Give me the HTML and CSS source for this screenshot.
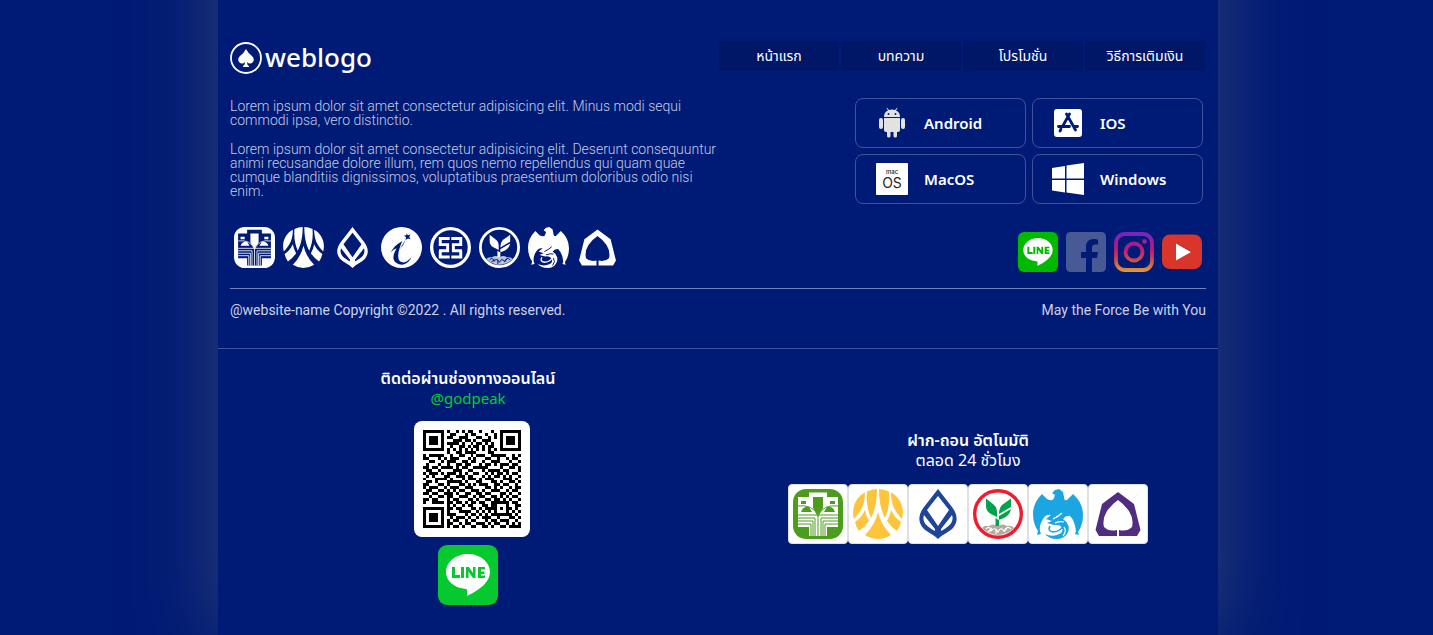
FILE: index.html
```html
<!DOCTYPE html>
<html lang="th">
<head>
<meta charset="utf-8">
<meta name="viewport" content="width=device-width, initial-scale=1">
<title>weblogo</title>
<link rel="stylesheet" href="styles.css">
</head>
<body>
<svg class="sprite" aria-hidden="true">
  <symbol id="baac" viewBox="0 0 50 50">
    <rect width="50" height="50" rx="13" fill="currentColor"/>
    <path class="cut" d="M5 8H16V3.500H34V8H45V38H34V47H16V38H5Z"/>
    <path d="M20 8H30V19L25 26L20 19ZM8 12H13V15H8ZM37 12H42V15H37ZM8 23Q10 17 16 18L19 23ZM42 23Q40 17 34 18L31 23Z" fill="currentColor"/>
    <path d="M5 17Q20 15 25 27Q30 15 45 17M5 26H45M5 29H22V47M45 29H28V47M5 32H20V47M45 32H30V47M5 35H18V47M45 35H32V47M25 26V47" fill="none" stroke="currentColor"/>
  </symbol>
  <symbol id="krungsri" viewBox="0 0 50 50">
    <path fill="currentColor" d="M12 3.500C12 14 9 22 1 30C-2 19 3 8 12 3.500ZM14 2.500Q19 0 24 0C24 12 22 21 18 29C15 22 13 14 14 2.500ZM36 2.500Q31 0 26 0C26 12 28 21 32 29C35 22 37 14 36 2.500ZM38 3.500C38 14 41 22 49 30C52 19 47 8 38 3.500ZM12 21Q13 27 16 32Q12 38 6 42Q3 38 2 33Q9 28 12 21ZM38 21Q37 27 34 32Q38 38 44 42Q47 38 48 33Q41 28 38 21ZM25 23Q28 36 38 46Q25 54 12 46Q22 36 25 23Z"/>
  </symbol>
  <symbol id="bangkok" viewBox="0 0 50 50">
    <path fill="currentColor" fill-rule="evenodd" d="M25 0L39 18C45 26 45 33 40 39C36 43 30 45 25 50C20 45 14 43 10 39C5 33 5 26 11 18ZM25 7L14 21L25 37L36 21ZM11 26C9 32 12 37 22 42V40ZM39 26C41 32 38 37 28 42V40Z"/>
  </symbol>
  <symbol id="islamic" viewBox="0 0 50 50">
    <circle cx="25" cy="25" r="25" fill="currentColor"/>
    <path class="cut" d="M12 31C16 23 21 20 26 17C22 26 17 41 26 43C31 44 34 40 37 37C33 46 25 48 19 44C12 39 16 32 19 26Q15 27 12 31ZM31 8L33 10L36 9L34.500 12L36 15L33 14L30 16L30.500 12.500L28 10.500L31 10Z"/>
    <path class="cut" d="M30 15L23 27L27 22Z"/>
  </symbol>
  <symbol id="icbc" viewBox="0 0 50 50">
    <circle cx="25" cy="25" r="23" fill="none" stroke="currentColor" stroke-width="4"/>
    <path d="M24 14H12.500V21.500H21.500V29H11M26 14H37.500V21.500H28.500V29H39M12.500 29V36.500H24M37.500 29V36.500H26" fill="none" stroke="currentColor" stroke-width="3.600"/>
  </symbol>
  <symbol id="kasikorn" viewBox="0 0 50 50">
    <path class="stones" d="M9 39Q11 36 16 37Q20 34 25 37Q30 34 34 37Q39 36 41 39Q34 46 25 46Q16 46 9 39Z"/>
    <path class="cutline" d="M13 40Q17 36 18 42Q22 37 25 43Q28 37 31 42Q34 36 38 40M15 43L19 39M23 45V40M31 43L34 39"/>
    <path class="leaf" d="M13 9.500L20 15Q24 18 24 23V28L17 24.500Q13 22 13 17ZM38 9.500L29 16Q26 19 26 25L38 18ZM38 20L26 27V37H22.500V29L24 30Q25 32 31 29Q37 26 38 20Z"/>
    <circle cx="25" cy="25" r="23.300" fill="none" stroke="currentColor" stroke-width="3.400"/>
  </symbol>
  <symbol id="krungthai" viewBox="0 0 50 50">
    <path fill="currentColor" d="M19 4L22 1L26 0L30 3L31 8Q31 12 34 11L40 5Q50 14 50 26Q50 36 45 43L46 46L42 45L43 42Q42 32 37 27Q33 26 30 30Q38 36 35 43Q32 50 24 50Q16 50 12 45Q18 48 24 46Q31 44 29 39Q27 35 21 36L14 34L19 32L13 30L18 26Q13 25 10 30Q6 36 7 42L8 45L4 46L5 42Q0 35 0 25Q0 14 9 5L14 10Q20 13 21 9L22 6Z"/>
    <path d="M17 37Q14 42 20 43Q28 43 33 33" fill="none" stroke="currentColor" stroke-width="1.600"/>
    <path class="cutline" d="M20 30Q26 27 29 24M22 34Q27 32 31 33M30 47Q34 42 31 38"/>
  </symbol>
  <symbol id="savings" viewBox="0 0 50 50">
    <path fill="currentColor" d="M25 3L41 15L47.500 41L44 47H26V41Q34 43 39 38Q41 30 36 22Q31 15 25 11Q19 15 14 22Q9 30 11 38Q16 43 24 41V47H6L2.500 41L9 15Z"/>
    <path class="cut" d="M24 40H26V47H24Z"/>
  </symbol>
  <symbol id="line" viewBox="0 0 60 60">
    <rect width="60" height="60" rx="9" fill="currentColor"/>
    <path fill="#fff" d="M30 9C18 9 8 17 8 27C8 36 16 43 28 44Q30 45 29 51Q52 40 52 27C52 17 42 9 30 9Z"/>
    <path d="M17 22H20V30H25V33H17ZM26 22H29V33H26ZM31 22H34L38 28V22H40.500V33H38L33.500 26.500V33H31ZM43 22H50V24.500H46V26.500H49.500V29H46V30.500H50V33H43Z" transform="translate(-3 0)" fill="currentColor"/>
  </symbol>
</svg>

<footer class="page">
  <section class="main">
    <div class="top">
      <a class="logo" href="#">
        <svg viewBox="0 0 32 32" aria-hidden="true"><circle cx="16" cy="16" r="15" fill="none" stroke="#fff" stroke-width="1.800"/><path fill="#fff" d="M16 7Q18 11 22 14Q25 17 23 20Q20 23 17 20Q17 23 19 24V25H13V24Q15 23 15 20Q12 23 9 20Q7 17 10 14Q14 11 16 7Z"/></svg>
        <span>weblogo</span>
      </a>
      <nav class="menu">
        <a href="#">หน้าแรก</a>
        <a href="#">บทความ</a>
        <a href="#">โปรโมชั่น</a>
        <a href="#">วิธีการเติมเงิน</a>
      </nav>
    </div>

    <div class="middle">
      <div class="about">
        <p>Lorem ipsum dolor sit amet consectetur adipisicing elit. Minus modi sequi commodi ipsa, vero distinctio.</p>
        <p>Lorem ipsum dolor sit amet consectetur adipisicing elit. Deserunt consequuntur animi recusandae dolore illum, rem quos nemo repellendus qui quam quae cumque blanditiis dignissimos, voluptatibus praesentium doloribus odio nisi enim.</p>
      </div>
      <div class="apps">
        <a href="#">
          <svg viewBox="0 0 32 32" aria-hidden="true"><g fill="#e2e2e2"><path d="M8 10Q8 5 12 3.500L10.500 1L11 .7L13 3Q16 2 19 3L21 .7L21.500 1L20 3.500Q24 5 24 10Z"/><path d="M8 11H24V23Q24 25 22 25H21V29Q21 30.500 19.200 30.500T17.500 29V25H14.500V29Q14.500 30.500 12.800 30.500T11 29V25H10Q8 25 8 23Z"/><rect x="3" y="11" width="4" height="11" rx="2"/><rect x="25" y="11" width="4" height="11" rx="2"/></g><circle class="cut" cx="12.500" cy="7" r="1"/><circle class="cut" cx="19.500" cy="7" r="1"/></svg>
          <span>Android</span>
        </a>
        <a href="#">
          <svg viewBox="0 0 32 32" aria-hidden="true"><rect x="2" y="2" width="28" height="28" rx="3" fill="#fff"/><path class="navyline" d="M17.500 7L10.500 19.500M14.500 7L23.500 23M6.500 19.500H17.500M21.500 19.500H25.500M9 22L8 24"/></svg>
          <span>IOS</span>
        </a>
        <a href="#">
          <svg viewBox="0 0 32 32" aria-hidden="true"><rect width="32" height="32" rx="1" fill="#fff"/><text class="mac"><tspan class="mac-small" x="16" y="11">mac</tspan><tspan class="mac-big" x="16" y="25">OS</tspan></text></svg>
          <span>MacOS</span>
        </a>
        <a href="#">
          <svg viewBox="0 0 32 32" aria-hidden="true"><path fill="#fff" d="M0 5L13 3V15.500H0ZM14.500 2.500L32 0V15.500H14.500ZM0 17H13V29.500L0 27.500ZM14.500 17H32V32L14.500 29.500Z"/></svg>
          <span>Windows</span>
        </a>
      </div>
    </div>

    <div class="icons">
      <div class="banks">
        <svg><use href="#baac"/></svg>
        <svg><use href="#krungsri"/></svg>
        <svg><use href="#bangkok"/></svg>
        <svg><use href="#islamic"/></svg>
        <svg><use href="#icbc"/></svg>
        <svg><use href="#kasikorn"/></svg>
        <svg><use href="#krungthai"/></svg>
        <svg><use href="#savings"/></svg>
      </div>
      <div class="social">
        <a href="#" aria-label="LINE"><svg class="line-dark"><use href="#line"/></svg></a>
        <a href="#" aria-label="Facebook"><svg viewBox="0 0 40 40"><path fill="#485a96" d="M5 0H35Q40 0 40 5V35Q40 40 35 40H26V26H31L32 20H26V16Q26 12.500 29 12.500H32V7.500Q20 5 20 15V20H15V26H20V40H5Q0 40 0 35V5Q0 0 5 0Z"/></svg></a>
        <a href="#" aria-label="Instagram"><svg viewBox="0 0 40 40"><defs><linearGradient id="insta" x1="0" y1="0" x2="0" y2="40" gradientUnits="userSpaceOnUse"><stop stop-color="#7024c4"/><stop offset=".45" stop-color="#c21975"/><stop offset=".7" stop-color="#c74c4d"/><stop offset="1" stop-color="#e09b3d"/></linearGradient></defs><g fill="none" stroke="url(#insta)" stroke-width="3.800"><rect x="2" y="2" width="36" height="36" rx="9"/><circle cx="20" cy="20" r="8.500"/></g><circle cx="30.500" cy="9.500" r="2.400" fill="url(#insta)"/></svg></a>
        <a href="#" aria-label="YouTube"><svg viewBox="0 0 40 40"><rect y="2.500" width="40" height="34.500" rx="8" fill="#d9352a"/><path d="M14 11L29 19.500L28 20Z" fill="#4a1018"/><path d="M14 11.500L29 20L14 28.500Z" fill="#fff"/></svg></a>
      </div>
    </div>

    <div class="legal">
      <span>@website-name Copyright ©2022 . All rights reserved.</span>
      <span>May the Force Be with You</span>
    </div>
  </section>

  <section class="contact">
    <div class="channel">
      <h2>ติดต่อผ่านช่องทางออนไลน์</h2>
      <a class="handle" href="#">@godpeak</a>
      <svg class="qr" viewBox="-3 -3 39 39" role="img" aria-label="QR code" shape-rendering="crispEdges"><path id="qr-modules"/></svg>
      <a href="#" aria-label="LINE"><svg class="line-large"><use href="#line"/></svg></a>
    </div>
    <div class="deposit">
      <h2>ฝาก-ถอน อัตโนมัติ</h2>
      <p>ตลอด 24 ชั่วโมง</p>
      <div class="cards">
        <div class="card baac"><svg><use href="#baac"/></svg></div>
        <div class="card krungsri"><svg><use href="#krungsri"/></svg></div>
        <div class="card bangkok"><svg><use href="#bangkok"/></svg></div>
        <div class="card kasikorn"><svg><use href="#kasikorn"/></svg></div>
        <div class="card krungthai"><svg><use href="#krungthai"/></svg></div>
        <div class="card savings"><svg><use href="#savings"/></svg></div>
      </div>
    </div>
  </section>
</footer>
<script src="qr.js"></script>
</body>
</html>
```
FILE: styles.css
```css
:root {
  --navy: #001b75;
  --cut: var(--navy);
  --leaf: #fff;
  --stones: #b9c1dc;
}
* { box-sizing: border-box; }
body {
  margin: 0;
  padding-left: 3px;
  overflow-x: hidden;
  background: var(--navy);
  color: #fff;
  font-family: "Noto Sans", "Noto Sans Thai", sans-serif;
  font-size: 14px;
}
a { color: inherit; text-decoration: none; }
h2, p { margin: 0; }
svg { display: block; }
.sprite { position: absolute; width: 0; height: 0; }
.cut { fill: var(--cut); }
.cutline { fill: none; stroke: var(--cut); stroke-width: 1.2; }
.navyline { fill: none; stroke: var(--navy); stroke-width: 2.8; stroke-linecap: round; }
.leaf { fill: var(--leaf); }
.stones { fill: var(--stones); }

.page {
  max-width: 1000px;
  margin: -100px auto 0;
  padding-top: 100px;
  background: var(--navy);
  box-shadow: 0 0 72px #2e4174;
}
.main {
  padding: 41px 12px 28px;
  border-bottom: 1px solid #40549a;
}
.top, .middle, .icons, .legal {
  display: flex;
  justify-content: space-between;
}
.logo {
  display: flex;
  align-items: center;
  gap: 3px;
  height: 34px;
  font-size: 26px;
  font-weight: 500;
  line-height: 30px;
}
.logo span { padding-bottom: 2px; }
.logo svg { width: 32px; height: 32px; }
.menu { display: flex; gap: 2px; padding-right: 1px; }
.menu a {
  width: 120px;
  height: 30px;
  line-height: 30px;
  text-align: center;
  background: #001768;
}

.middle { padding-top: 23px; }
.about {
  display: flex;
  flex-direction: column;
  gap: 15px;
  width: 50%;
  padding-top: 1px;
  color: #c5cce5;
  font-family: Roboto, sans-serif;
  font-size: 14px;
  font-weight: 300;
  line-height: 14px;
}
.apps {
  display: grid;
  grid-template-columns: 171px 171px;
  gap: 6px;
  padding-right: 3px;
}
.apps a {
  display: flex;
  align-items: center;
  gap: 16px;
  height: 50px;
  padding-left: 20px;
  border: 1px solid #40549a;
  border-radius: 8px;
  font-size: 15px;
  font-weight: 600;
}
.apps a:nth-child(even) { padding-left: 19px; }
.apps svg { width: 32px; height: 32px; }
.mac { font-family: Inter, sans-serif; text-anchor: middle; fill: #222; }
.mac-small { font-size: 6px; font-weight: 500; }
.mac-big { font-size: 14px; font-weight: 400; }

.icons {
  align-items: flex-start;
  padding: 23px 4px 16px;
  border-bottom: 1px solid #7381b5;
}
.banks { display: flex; gap: 8px; }
.banks svg { width: 41px; height: 41px; }
.social { display: flex; gap: 8px; padding-top: 5px; }
.social svg { width: 40px; height: 40px; }
.line-dark { color: #00b900; }
.legal {
  padding-top: 11px;
  color: #ccd2e7;
  font-family: Roboto, sans-serif;
  line-height: 20px;
}

.contact {
  display: grid;
  grid-template-columns: 1fr 1fr;
  padding: 19px 0 30px;
  font-size: 16px;
  line-height: 20px;
  text-align: center;
}
.contact h2 { font-size: 16px; font-weight: 600; }
.channel, .deposit { display: flex; flex-direction: column; align-items: center; }
.deposit { justify-content: center; }
.handle { color: #00d02b; font-size: 15px; }
.qr {
  width: 116px;
  height: 116px;
  margin: 13px 0 8px 8px;
  border-radius: 8px;
  background: #fff;
}
.line-large { width: 60px; height: 60px; color: #06c92f; }
.cards { display: flex; padding-top: 14px; }
.card {
  --cut: #fff;
  padding: 4px;
  border: 1px solid #dee2e6;
  border-radius: 4px;
  background: #fff;
}
.card svg { width: 50px; height: 50px; }
.card.baac { color: #4c9d1e; }
.card.krungsri { color: #fec43b; }
.card.bangkok { color: #1e4598; }
.card.kasikorn { color: #ef1c2d; --leaf: #00a34c; --stones: #b5aaa2; }
.card.krungthai { color: #1ba5e1; }
.card.savings { color: #4f2d80; }
```
FILE: qr.js
```js
const rows = [
  "111111101001010110010001001111111",
  "100000100110001011000100101000001",
  "101110101100111000110010101011101",
  "101110100011101101001110001011101",
  "101110101111010010110101001011101",
  "100000100100110101101011001000001",
  "111111101010101010101010101111111",
  "000000001001101111000011000000000",
  "101111100100110010111001111100101",
  "110001010111000101000110010010110",
  "001100101110011011001001110001001",
  "010001001001101100010110101110110",
  "110110111101011001111100001001101",
  "011001000011100110001011110110001",
  "101110101110101001100101011010110",
  "010100011001110110001010110101001",
  "100011110100010111010111000111010",
  "011010001111101000110001101001101",
  "110001101000110101011100110110010",
  "101110010111001110000110101001011",
  "011001101010110011101001110010110",
  "110110011101001100110110001101001",
  "001001101100111001011001101010110",
  "110110001011000110100110110101001",
  "100111101101101011011001111110110",
  "000000001010010110001101100010011",
  "111111101101100011010111101011010",
  "100000101000111100101010100010101",
  "101110101110001011010101111111010",
  "101110100101110100101110010001101",
  "101110101011001011000101101110010",
  "100000101100101100111010110010101",
  "111111101011010011001101001101111"
];

document.getElementById("qr-modules").setAttribute(
  "d",
  rows.map((row, y) => [...row].map((cell, x) => cell === "1" ? `M${x} ${y}h1v1h-1z` : "").join("")).join("")
);
```
